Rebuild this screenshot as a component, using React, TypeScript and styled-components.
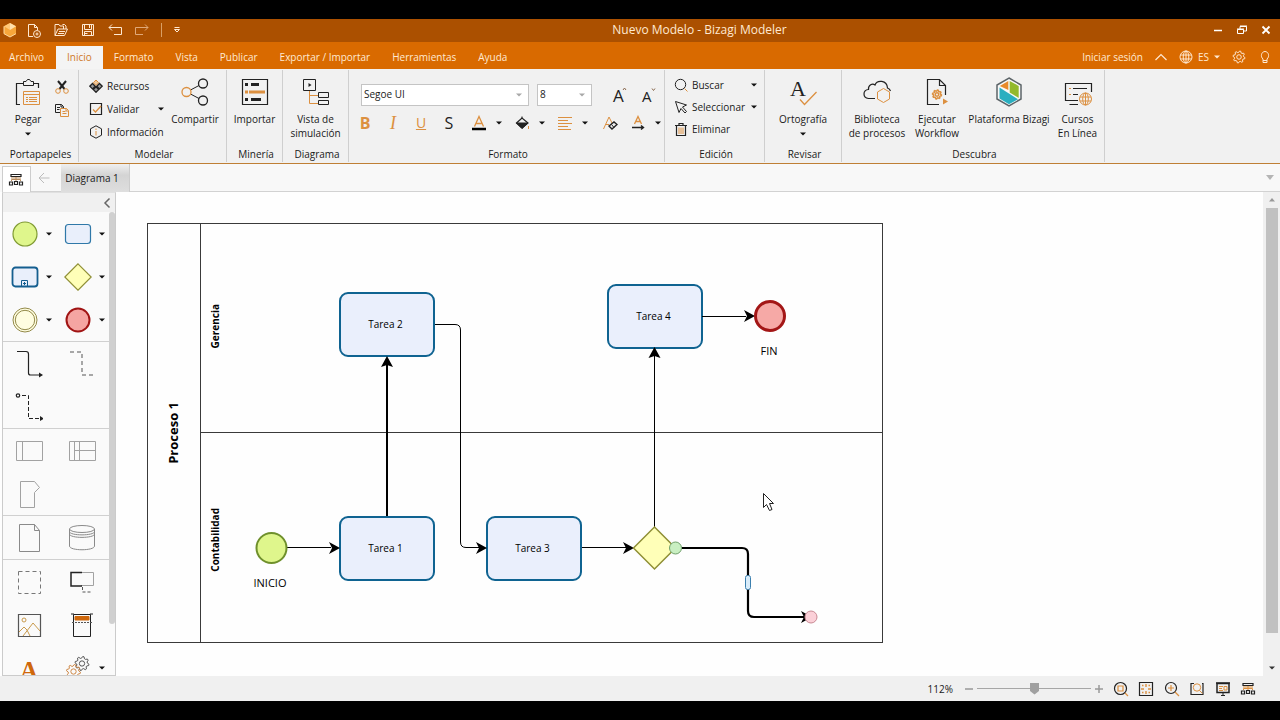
import React from 'react';
import styled, { createGlobalStyle, css } from 'styled-components';

const INK = '#222222';
const AMBER = '#dc9040';
const RUST = '#cf680c';
const CREAM = '#ffe9d2';

const GlobalStyle = createGlobalStyle`
  * { box-sizing: border-box; }
  body {
    margin: 0;
    background: #000;
    color: #1a1a1a;
    font: 10px/14px 'Open Sans', 'Noto Sans', sans-serif;
  }
  button, select, input { font: inherit; color: inherit; margin: 0; }
  button { background: none; border: 0; padding: 0; cursor: pointer; }
  svg { display: block; flex: none; }
`;

/* ---------- shell ---------- */

const Window = styled.div`
  display: flex;
  flex-direction: column;
  height: 100vh;
  padding: 19px 0;
  background: #000;
  overflow: hidden;
`;

const TitleBar = styled.header`
  display: flex;
  align-items: center;
  flex: none;
  height: 23px;
  padding-bottom: 1px;
  background: #ab5000;
  color: ${CREAM};
`;

const QuickAccess = styled.div`
  display: flex;
  align-items: center;
  gap: 11px;
  width: 187px;
  padding-left: 2px;
`;

const Logo = styled.span`
  display: flex;
  margin-right: -3px;
`;

const Rule = styled.span`
  width: 1px;
  height: 14px;
  background: #d9a066;
`;

const WindowTitle = styled.h1`
  flex: 1;
  margin: 0;
  font-size: 12px;
  line-height: 20px;
  font-weight: 400;
  text-align: center;
`;

const WindowControls = styled.div`
  display: flex;
  gap: 12px;
  padding-right: 8px;
`;

const IconButton = styled.button<{ $w?: number; $h?: number }>`
  display: flex;
  align-items: center;
  justify-content: center;
  width: ${p => p.$w ?? 16}px;
  height: ${p => p.$h ?? 16}px;
  flex: none;
`;

const MenuBar = styled.nav`
  display: flex;
  align-items: stretch;
  flex: none;
  height: 27px;
  padding-top: 4px;
  background: #d96a00;
  color: ${CREAM};
`;

const MenuTab = styled.button<{ $active?: boolean; $file?: boolean }>`
  padding: 0 11px 2px;
  ${p => p.$file && css`width: 53px; padding: 0 0 2px; margin-right: 3px;`}
  ${p => p.$active && css`background: #f4f4f4; color: #d07a28;`}
`;

const Account = styled.div`
  display: flex;
  align-items: center;
  gap: 12px;
  margin-left: auto;
  padding: 0 8px 2px 0;
`;

const Language = styled.button`
  display: flex;
  align-items: center;
  gap: 5px;
`;

/* ---------- ribbon ---------- */

const Ribbon = styled.section`
  display: flex;
  flex: none;
  height: 95px;
  padding: 1px 0;
  background: #f1f1f1;
  border-bottom: 1px solid #bf7f35;
`;

const Group = styled.section<{ $w: number }>`
  display: flex;
  flex-direction: column;
  flex: none;
  width: ${p => p.$w}px;
  border-right: 1px solid #cfcfcf;
`;

const GroupBody = styled.div<{ $pad?: number; $gap?: number; $center?: boolean }>`
  display: flex;
  flex: 1;
  gap: ${p => p.$gap ?? 0}px;
  padding: 5px 0 0 ${p => p.$pad ?? 0}px;
  justify-content: ${p => (p.$center ? 'center' : 'flex-start')};
`;

const GroupName = styled.h2`
  margin: 0;
  padding: 0 0 1px 3px;
  font-size: 10px;
  line-height: 14px;
  font-weight: 400;
  text-align: center;
`;

const BigButton = styled.button<{ $w: number }>`
  display: flex;
  flex-direction: column;
  align-items: center;
  align-self: flex-start;
  gap: 3px;
  width: ${p => p.$w}px;
  white-space: pre-line;
  line-height: 14px;
`;

const BigIcon = styled.span`
  display: flex;
  align-items: center;
  height: 34px;
`;

const CaretSlot = styled.span`
  display: flex;
  align-items: center;
  height: 10px;
`;

const ButtonStack = styled.div<{ $w: number; $row: number }>`
  display: grid;
  grid-auto-rows: ${p => p.$row}px;
  align-content: start;
  width: ${p => p.$w}px;
`;

const RowButton = styled.button`
  display: flex;
  align-items: center;
  gap: 4px;
  padding-bottom: 2px;
  text-align: left;
  white-space: nowrap;
  & > span { flex: 1; }
`;

const FormatPane = styled.div`
  display: flex;
  flex-direction: column;
  gap: 7px;
  padding: 9px 0 0 8px;
`;

const FormatRow = styled.div<{ $gap: number; $indent?: number }>`
  display: flex;
  align-items: center;
  gap: ${p => p.$gap}px;
  padding-left: ${p => p.$indent ?? 0}px;
`;

const SelectBox = styled.label<{ $w: number }>`
  display: grid;
  grid-template-columns: 1fr 12px;
  align-items: center;
  width: ${p => p.$w}px;
  height: 22px;
  background: #fff;
  border: 1px solid #c4c4c4;
`;

const Select = styled.select`
  appearance: none;
  width: 100%;
  height: 20px;
  padding: 0 0 2px 2px;
  border: 0;
  background: none;
`;

const SplitButton = styled.button`
  display: flex;
  align-items: center;
  gap: 9px;
  height: 20px;
`;

const Letter = styled.span<{ $tone?: string; $size?: number; $kind?: 'bold' | 'italic' | 'underline' | 'strike' }>`
  color: ${p => p.$tone ?? AMBER};
  font-size: ${p => p.$size ?? 16}px;
  line-height: 20px;
  ${p => p.$kind === 'bold' && css`font-weight: 700;`}
  ${p => p.$kind === 'italic' && css`font-family: 'Liberation Serif', serif; font-style: italic;`}
  ${p => p.$kind === 'underline' && css`font-size: 14px; text-decoration: underline;`}
`;

/* ---------- document tabs ---------- */

const DocumentBar = styled.div`
  display: flex;
  flex: none;
  height: 28px;
  padding-left: 2px;
  background: #f8f8f8;
`;

const OverviewButton = styled.button`
  display: flex;
  align-items: center;
  justify-content: center;
  width: 29px;
  margin-top: 2px;
  padding-right: 2px;
  border: 1px solid #cdcdcd;
  border-bottom: 0;
  background: #fff;
`;

const BackButton = styled.button`
  display: flex;
  align-items: center;
  justify-content: center;
  width: 30px;
  padding-right: 4px;
  border-bottom: 1px solid #d2d2d2;
`;

const DocumentTab = styled.button`
  width: 69px;
  background: linear-gradient(#f0f0f0, #d4d4d4 40%, #dedede);
  border-right: 1px solid #cccccc;
  padding-right: 6px;
`;

const DocumentFill = styled.div`
  display: flex;
  align-items: center;
  justify-content: flex-end;
  flex: 1;
  padding-right: 5px;
  border-bottom: 1px solid #d2d2d2;
`;

/* ---------- workspace ---------- */

const Workspace = styled.main`
  display: flex;
  flex: 1;
  min-height: 0;
  background: #fefefe;
`;

const Palette = styled.aside`
  display: flex;
  flex-direction: column;
  flex: none;
  width: 114px;
  margin-left: 2px;
  border: 1px solid #cbcbcb;
  border-top-color: #e0e0e0;
  background: #fafafa;
`;

const PaletteHeader = styled.div`
  display: flex;
  align-items: center;
  justify-content: flex-end;
  flex: none;
  height: 19px;
  padding-right: 3px;
  background: #f0f0f0;
`;

const PaletteScroll = styled.div`
  display: flex;
  flex: 1;
  min-height: 0;
  overflow: hidden;
`;

const PaletteSections = styled.div`
  width: 106px;
  flex: none;
`;

const PaletteSection = styled.section`
  display: grid;
  grid-template-columns: 1fr 1fr;
  grid-auto-rows: 43px;
  border-bottom: 1px solid #d0d0d0;
`;

const PaletteItem = styled.button<{ $menu?: boolean }>`
  display: flex;
  align-items: center;
  gap: 7px;
  justify-content: ${p => (p.$menu ? 'flex-start' : 'center')};
  padding: ${p => (p.$menu ? '0 0 0 8px' : '0 2px 0 0')};
`;

const PaletteThumb = styled.div`
  width: 6px;
  height: 89%;
  border-radius: 3px;
  background: #d0d0d0;
`;

const Canvas = styled.div`
  position: relative;
  flex: 1;
  overflow: hidden;
`;

const Pool = styled.section`
  position: absolute;
  left: 31px;
  top: 31px;
  display: flex;
  width: 736px;
  height: 420px;
  border: 1px solid #3a3a3a;
`;

const PoolName = styled.h2`
  display: flex;
  align-items: center;
  justify-content: center;
  width: 53px;
  margin: 0;
  padding-right: 2px;
  border-right: 1px solid #3a3a3a;
  font-size: 13px;
  line-height: 16px;
  font-weight: 700;
  color: #000;
`;

const Lanes = styled.div`
  display: grid;
  grid-template-rows: calc(50% - 1px) 1fr;
  flex: 1;
`;

const Lane = styled.section`
  display: flex;
  align-items: center;
  padding-left: 6px;
  & + & { border-top: 1px solid #3a3a3a; padding-top: 8px; }
`;

const LaneName = styled.h3`
  margin: 0;
  font-size: 10px;
  line-height: 16px;
  font-weight: 700;
  color: #000;
`;

const Upright = styled.span`
  writing-mode: vertical-rl;
  transform: rotate(180deg);
`;

const Task = styled.div<{ $x: number; $y: number }>`
  position: absolute;
  left: ${p => p.$x}px;
  top: ${p => p.$y}px;
  display: flex;
  align-items: center;
  justify-content: center;
  width: 96px;
  height: 65px;
  padding: 0 3px 2px 0;
  border: 2px solid #0f6391;
  border-radius: 9px;
  background: #eaeffc;
  color: #000;
`;

const Caption = styled.div<{ $x: number; $y: number }>`
  position: absolute;
  left: ${p => p.$x}px;
  top: ${p => p.$y}px;
  width: 60px;
  font-size: 11px;
  line-height: 16px;
  text-align: center;
  color: #000;
`;

const Connectors = styled.svg`
  position: absolute;
  left: 0;
  top: 0;
`;

const ScrollBar = styled.div`
  display: flex;
  flex-direction: column;
  align-items: center;
  flex: none;
  width: 17px;
  background: #f0f0f0;
`;

const ScrollArrow = styled.button`
  display: flex;
  align-items: center;
  justify-content: center;
  width: 17px;
  height: 16px;
`;

const ScrollTrack = styled.div`
  flex: 1;
  width: 12px;
`;

const ScrollThumb = styled.div`
  height: 94%;
  background: #c1c1c1;
`;

/* ---------- status bar ---------- */

const StatusBar = styled.footer`
  display: flex;
  align-items: center;
  justify-content: flex-end;
  flex: none;
  height: 25px;
  padding-right: 24px;
  background: #f0f0f0;
`;

const ZoomValue = styled.output`
  margin-right: 12px;
`;

const ZoomSlider = styled.input`
  appearance: none;
  width: 114px;
  height: 14px;
  margin: 0 4px;
  background: linear-gradient(#a6a6a6, #a6a6a6) center / 100% 1px no-repeat;
  &::-webkit-slider-thumb {
    appearance: none;
    width: 9px;
    height: 12px;
    background: #a0a0a0;
    clip-path: polygon(0 0, 100% 0, 100% 70%, 50% 100%, 0 70%);
  }
`;

const ViewButtons = styled.div`
  display: flex;
  justify-content: space-between;
  width: 143px;
  margin-left: 10px;
`;

/* ---------- icons ---------- */

type IconProps = { w?: number; h?: number; c?: string; sw?: number; children: React.ReactNode };
const Icon = ({ w = 16, h = w, c = INK, sw = 1, children }: IconProps) => (
  <svg width={w} height={h} viewBox={`0 0 ${w} ${h}`} fill="none" stroke={c} strokeWidth={sw} aria-hidden="true">
    {children}
  </svg>
);

const Caret = ({ c = '#111' }: { c?: string }) => (
  <Icon w={6} h={4} c="none"><path d="M0 .5h6L3 3.5z" fill={c} /></Icon>
);

const Gear = ({ x, y, r, c, sw = 1 }: { x: number; y: number; r: number; c: string; sw?: number }) => {
  const pts: string[] = [];
  for (let i = 0; i < 32; i++) {
    const radius = i % 4 < 2 ? r : r * 0.76;
    const a = ((i + 0.5) * Math.PI) / 16;
    pts.push(`${(x + radius * Math.cos(a)).toFixed(2)},${(y + radius * Math.sin(a)).toFixed(2)}`);
  }
  return (
    <g stroke={c} strokeWidth={sw} strokeLinejoin="round">
      <polygon points={pts.join(' ')} />
      <circle cx={x} cy={y} r={r * 0.38} />
    </g>
  );
};

const BizagiLogo = () => (
  <Icon w={16} c="none">
    <path d="M8 1l6 3.300v7.400L8 15l-6-3.300V4.300z" fill="#f7a63a" />
    <path d="M8 1l6 3.300L8 8z" fill="#ffe0ad" />
    <path d="M8 1L2 4.300 8 8z" fill="#ffc878" />
    <path d="M2 4.300v7.400L8 15l6-3.300" stroke="#ffd9a0" />
  </Icon>
);
const NewIcon = () => (
  <Icon c={CREAM}>
    <path d="M7 14.500H2.500v-12h6l3 3V8M8.500 2.500v3h3" />
    <circle cx="11" cy="12" r="3.500" /><path d="M11 10.500v3M9.500 12h3" />
  </Icon>
);
const OpenIcon = () => (
  <Icon c={CREAM}>
    <path d="M2 13.500V2.500h4l1 1.500h3.500v3M2 13.500l3-6.500h9.500l-3 6.500zM6 9.500h6M5 11.500h6M9.500 2.500h2l1.500 1.500v3" />
  </Icon>
);
const SaveIcon = () => (
  <Icon c={CREAM}><path d="M2.500 2.500h11v11h-11zM4.500 2.500v5h7v-5M4.500 13.500v-4h7v4M9.500 3v3M4.500 11.500h3" /></Icon>
);
const UndoIcon = () => <Icon c={CREAM}><path d="M2 5.500h12.500v7H7M5 2.500l-3 3 3 3" /></Icon>;
const RedoIcon = () => <Icon c="#e0a878"><path d="M14 5.500H1.500v7H9M11 2.500l3 3-3 3" /></Icon>;
const CustomizeIcon = () => <Icon w={8} h={8} c={CREAM}><path d="M1.500 1.500h5M1.500 3.500h5L4 6z" /></Icon>;

const Globe = ({ c = CREAM }: { c?: string }) => (
  <Icon w={14} c={c}>
    <circle cx="7" cy="7" r="6" /><ellipse cx="7" cy="7" rx="2.800" ry="6" /><path d="M1.500 5h11M1.500 9h11M7 1v12" />
  </Icon>
);
const Bulb = () => (
  <Icon w={14} c={CREAM}>
    <path d="M5 10.500V9C2 6.500 3.500 1.500 7 1.500S12 6.500 9 9v1.500zM5 12.500h4M5 10.500v2M9 10.500v2" />
  </Icon>
);

const PasteIcon = () => (
  <Icon w={32}>
    <path d="M8 28.500H4.500v-21H11M22 7.500h4.500V12" strokeWidth="1.200" />
    <path d="M11.500 9.500v-4H14l1.500-2h2l1.500 2h2.500v4z" />
    <g stroke={AMBER}>
      <path d="M11.500 15.500h16v13h-16zM11.500 18.500h16M14 21.500h2M17 21.500h8M14 23.500h2M17 23.500h8M14 25.500h2M17 25.500h8" />
    </g>
  </Icon>
);
const CutIcon = () => (
  <Icon>
    <path d="M4 2l6.500 8M12 2L5.500 10" strokeWidth="2" />
    <g stroke={AMBER}><circle cx="4" cy="12" r="2.300" /><circle cx="12" cy="12" r="2.300" /></g>
  </Icon>
);
const CopyIcon = () => (
  <Icon>
    <path d="M6 10.500H1.500v-8h6l2 2V6M7 2.500v2.500h2M3 5.500h3M3 7.500h2.500" />
    <path d="M6.500 6.500h6l2 2v6h-8zM12 6.500V9h2M8.500 9.500h3M8.500 11.500h4" stroke={AMBER} />
  </Icon>
);
const ResourcesIcon = () => (
  <Icon w={14}>
    <path d="M7 1l2.700 2.700L7 6.400 4.300 3.700z" stroke={AMBER} fill="#efc79a" />
    <path d="M3.500 4.500L6.200 7.200 3.500 9.900.8 7.200zM10.500 4.500l2.700 2.700-2.700 2.700-2.700-2.700zM7 7.900l2.700 2.700L7 13.300l-2.700-2.700z" strokeWidth="1.300" fill="#9a9a9a" />
  </Icon>
);
const ValidateIcon = () => (
  <Icon w={14}><path d="M1.500 1.500h11v11h-11z" strokeWidth="1.200" /><path d="M4 7.500L6.500 10 12 4" stroke={AMBER} strokeWidth="1.300" /></Icon>
);
const InfoIcon = () => (
  <Icon w={14}>
    <path d="M7 .8l5.500 3v6.400L7 13.200l-5.500-3V3.800z" />
    <path d="M7 6v4.500M7 3.500V5" stroke={AMBER} />
  </Icon>
);
const ShareIcon = () => (
  <Icon w={32}>
    <path d="M11.500 14L20 9.500M11.500 18l8.500 4.500" />
    <g strokeWidth="1.300"><circle cx="24" cy="7.500" r="4.500" /><circle cx="24" cy="24.500" r="4.500" />
      <circle cx="7.500" cy="16" r="4.500" stroke={AMBER} /></g>
  </Icon>
);
const ImportIcon = () => (
  <Icon w={32}>
    <path d="M3.500 3.500h25v25h-25z" strokeWidth="1.200" />
    <g stroke="none" fill={INK}>
      <path d="M6 7h3v3H6zM12 7h8v3h-8zM6 22h3v3H6zM12 22h10v3H12z" />
      <path d="M6 14.500h3v3H6zM10 14.500h16v3H10z" fill={AMBER} />
    </g>
  </Icon>
);
const SimulationIcon = () => (
  <Icon w={32}>
    <path d="M3.500 3.500h12v11h-12z" /><path d="M8.500 7v4l3-2z" fill={INK} stroke="none" />
    <path d="M9.500 15v12.500H18M9.500 19.500H18" stroke={AMBER} />
    <path d="M18.500 16.500h10v5h-10zM18.500 24.500h10v4h-10z" />
  </Icon>
);
const SpellIcon = () => (
  <Icon w={32}>
    <text x="3" y="20" fill={INK} stroke="none" fontFamily="Liberation Serif, serif" fontSize="22">A</text>
    <path d="M13 23.500l4.500 5L29.500 16" stroke={AMBER} strokeWidth="1.300" />
  </Icon>
);
const CloudIcon = () => (
  <Icon w={32}>
    <path d="M14 22.500H7.500c-6-.5-6-8.500 0-9C7 9 11.500 7 14 9c2-5.500 12-5 12.500 3 1.500.5 2.500 1.500 3 3" strokeWidth="1.200" />
    <path d="M22.500 12.500l6 3.500v7l-6 3.500-6-3.500v-7z" stroke={AMBER} fill="#f1f1f1" />
  </Icon>
);
const WorkflowIcon = () => (
  <Icon w={32}>
    <path d="M18 28.500H6.500v-25h12l6 6V19M18.500 3.500v6h6" strokeWidth="1.200" />
    <Gear x={16} y={18.500} r={4.500} c={AMBER} sw={1.500} />
    <path d="M22 22.500v6l5-3z" fill={AMBER} stroke="none" />
  </Icon>
);
const PlatformIcon = () => (
  <Icon w={32} c="none">
    <path d="M16 2l12 7v14l-12 7L4 23V9z" fill="#f8f8f8" stroke="#5c6468" strokeWidth="1.500" />
    <path d="M15.300 5v9L6.800 10z" fill="#e88a2a" />
    <path d="M16.700 5l9 5v12l-9-5.500z" fill="#93b92c" />
    <path d="M6.500 11.500L25 23.300 16 28.300 6.500 22.500z" fill="#29afc0" />
  </Icon>
);
const CoursesIcon = () => (
  <Icon w={32}>
    <path d="M16 24.500H3.500v-17h26V16M7.500 28.500H16M11 12.500h14M11 18.500h5" strokeWidth="1.200" />
    <path d="M7 12.500h2M7 18.500h2" stroke={AMBER} />
    <g stroke={AMBER}><circle cx="23.500" cy="23" r="6" fill="#f1f1f1" /><ellipse cx="23.500" cy="23" rx="2.800" ry="6" /><path d="M18 21h11M18 25h11M23.500 17v12" /></g>
  </Icon>
);

const FillIcon = () => (
  <Icon><path d="M2.500 8l5.500-5 6 5-6 5z" strokeWidth="1.200" /><path d="M2.500 8h11.500L8 13.500z" fill={INK} /><path d="M8 3V1.500" /><path d="M14.500 11v3" stroke={AMBER} /></Icon>
);
const AlignIcon = () => <Icon c={AMBER}><path d="M1 2.500h14M1 5.500h10M1 8.500h14M1 11.500h10M1 14.500h13" /></Icon>;
const ClearFormatIcon = () => (
  <Icon>
    <path d="M1.500 14L7 2l3 6M4 9.500h3" stroke={AMBER} />
    <path d="M7 11l5-4 3 2.500-5 4.500z" strokeWidth="1.400" /><path d="M9.500 9.500l2.500 3" />
  </Icon>
);
const TextColorIcon = () => (
  <Icon><path d="M3.500 11.500L8 1.500l4.500 10M5 8.500h6" stroke={AMBER} strokeWidth="1.300" /><path d="M1 14h14" stroke="#000" strokeWidth="2.500" /></Icon>
);
const TextDirectionIcon = () => (
  <Icon><path d="M4.500 9L8 1.500 11.500 9M6 6.500h4" stroke={AMBER} strokeWidth="1.300" /><path d="M2 12.500h11M11 10.500l2.500 2-2.500 2" strokeWidth="1.400" /></Icon>
);
const FontSizeIcon = ({ size, up }: { size: number; up?: boolean }) => (
  <Icon w={16} h={26}>
    <text x="1" y="20" fill={INK} stroke="none" fontSize={size}>A</text>
    <path d={up ? 'M11 8l1.500-2L14 8' : 'M11 6.500l1.500 2 1.500-2'} stroke="#8a6a50" />
  </Icon>
);
const SearchIcon = () => (
  <Icon w={14}><circle cx="6.500" cy="6.500" r="5.200" /><path d="M10.500 10.500l3 3" stroke={AMBER} /></Icon>
);
const SelectIcon = () => <Icon w={14}><path d="M1.500 1.500l11 3.500-4 2 4 4.500-1.500 1.500-4-4.500-2 4z" /></Icon>;
const TrashIcon = () => (
  <Icon w={14}><path d="M1 3.500h12M5 3V1.500h4V3M2.500 4v9.500h9V4" strokeWidth="1.200" /><path d="M5 5.500v6.500M7 5.500v6.500M9 5.500v6.500" stroke={AMBER} /></Icon>
);
const TreeIcon = ({ accent = AMBER }: { accent?: string }) => (
  <Icon>
    <path d="M3 2.500h10v2H3z" strokeWidth="1.200" /><path d="M3 6h10M3.500 9V7.500h9V9M8 5v4" stroke={accent} />
    <path d="M1.500 10h3v3h-3zM6.500 9.500h3v3h-3zM11.500 10h3v3h-3z" strokeWidth="1.200" />
  </Icon>
);
const ZoomPageIcon = () => (
  <Icon><circle cx="7.500" cy="7.500" r="6" strokeWidth="1.200" /><path d="M5 5h5v5H5zM12 12l3 3" stroke={AMBER} strokeWidth="1.200" /></Icon>
);
const FitIcon = () => (
  <Icon><path d="M1.500 1.500h13v13h-13z" strokeWidth="1.200" /><path d="M8 3v3M8 10v3M3 8h3M10 8h3M4 4.500h1.500M10.500 4.500H12M4 11.500h1.500M10.500 11.500H12" stroke={AMBER} strokeWidth="1.400" /></Icon>
);
const ZoomInIcon = () => (
  <Icon><circle cx="7" cy="7" r="5.500" strokeWidth="1.200" /><path d="M7 4v6M4 7h6M11 11l4 4" stroke={AMBER} strokeWidth="1.200" /></Icon>
);
const ZoomAreaIcon = () => (
  <Icon><path d="M5 2.500H2v11h12v-11h-1" strokeWidth="1.200" /><circle cx="8" cy="6.500" r="3.700" stroke={AMBER} /><path d="M10.500 9.500l3 3" stroke={AMBER} /></Icon>
);
const PresentIcon = () => (
  <Icon><path d="M2 2.500h12v9H2z" strokeWidth="1.500" /><path d="M1 2h14" strokeWidth="1.500" /><path d="M4 5.500h4M4 7.500h3M4 9.500h4M9 5.500h3v3.500H9z" stroke={AMBER} /><path d="M8 11v3M6 14.500h4" /></Icon>
);

/* ---------- palette shapes ---------- */

const GREY = '#a2a2a2';
const shapes: Record<string, React.ReactNode> = {
  start: <Icon w={28}><circle cx="14" cy="14" r="12" fill="#dff68c" stroke="#7f9a32" strokeWidth="1.200" /></Icon>,
  task: <Icon w={28}><rect x="1.500" y="4.500" width="25" height="19" rx="3" fill="#e9effb" stroke="#2f78a8" strokeWidth="1.200" /></Icon>,
  subprocess: (
    <Icon w={28} c="#145e8f">
      <rect x="1.500" y="4.500" width="25" height="19" rx="3" fill="#e9effb" strokeWidth="1.800" />
      <path d="M10.500 17.500h6v6h-6zM13.500 19v3M12 20.500h3" />
    </Icon>
  ),
  gateway: <Icon w={28}><path d="M14 .8L27.200 14 14 27.200.8 14z" fill="#ffffb8" stroke="#8f8f35" strokeWidth="1.200" /></Icon>,
  intermediate: (
    <Icon w={28} c="#938a4a"><circle cx="14" cy="14" r="12" fill="#fffde0" /><circle cx="14" cy="14" r="9.700" /></Icon>
  ),
  end: <Icon w={28}><circle cx="14" cy="14" r="11.500" fill="#f5a5a2" stroke="#a01414" strokeWidth="2" /></Icon>,
  sequence: <Icon w={28}><path d="M2 1.500h9q2.500 0 2.500 2.500v19q0 2 2 2h11" strokeWidth="1.200" /><path d="M24 22.500l4 2.500-4 2.500z" fill={INK} stroke="none" /></Icon>,
  association: <Icon w={28} c="#555"><path d="M2 2h12v23h13" strokeDasharray="4 3" /></Icon>,
  message: (
    <Icon w={28}>
      <circle cx="3" cy="2.500" r="1.700" strokeWidth="1.200" />
      <path d="M7 2.500h6.500V25.500H26" strokeDasharray="4 2" /><path d="M25 23v5l4-2.500z" fill={INK} stroke="none" />
    </Icon>
  ),
  pool: <Icon w={28} c={GREY}><path d="M1.500 4.500h26v19h-26zM7.500 4.500v19" /></Icon>,
  lanes: <Icon w={28} c={GREY}><path d="M1.500 4.500h26v19h-26zM6.500 4.500v19M11.500 4.500v19M6.500 13.500h21" /></Icon>,
  milestone: <Icon w={28} c={GREY}><path d="M5.500 1.500h14l5 6-5 5v15h-14z" /></Icon>,
  dataObject: <Icon w={28} c="#8a8a8a"><path d="M4.500 .5h15l5 6v21h-20zM19.500 .5v6h5" /></Icon>,
  dataStore: (
    <Icon w={28} c="#8a8a8a">
      <ellipse cx="14" cy="5" rx="12.500" ry="3.500" />
      <path d="M1.500 5v17c0 5 25 5 25 0V5M1.500 7.500c0 4.500 25 4.500 25 0M1.500 10c0 4.500 25 4.500 25 0" />
    </Icon>
  ),
  group: <Icon w={28} c="#777"><path d="M3.500 3.500h22v22h-22z" strokeDasharray="4 3" /></Icon>,
  annotation: (
    <Icon w={28}>
      <path d="M13 4.500h12.500v13H13" stroke={GREY} /><path d="M14 4.500H3v13.500h11" strokeWidth="1.500" />
      <path d="M14.500 19v5h9" strokeDasharray="3 2" stroke="#555" />
    </Icon>
  ),
  image: (
    <Icon w={28}>
      <path d="M3.500 3.500h22v22h-22z" strokeWidth="1.200" stroke="#555" />
      <g stroke="#c99a4c"><circle cx="9" cy="9" r="2" /><path d="M4 21l5-5 3 3M8 25l10-13 7 8M12 19l3 6" /></g>
    </Icon>
  ),
  header: (
    <Icon w={28}>
      <path d="M5.500 3.500h17v22h-17z" /><path d="M7 5.500h14V9H7z" fill={RUST} stroke={RUST} />
      <path d="M4 11.500h20" strokeDasharray="2 1" stroke="#555" /><path d="M3 3h3M22 3h3" />
    </Icon>
  ),
  text: (
    <Icon w={28}><text x="5" y="25" fill={RUST} stroke="none" fontFamily="Liberation Serif, serif" fontWeight="700" fontSize="25">A</text></Icon>
  ),
  artifact: (
    <Icon w={28}><Gear x={18} y={9.500} r={7} c="#555" /><Gear x={9.500} y={17.500} r={7} c="#cf8a4a" /></Icon>
  ),
};

const sections: { items: [string, string, boolean?][] }[] = [
  { items: [['start', 'Evento de inicio', true], ['task', 'Tarea', true], ['subprocess', 'Subproceso', true], ['gateway', 'Compuerta', true], ['intermediate', 'Evento intermedio', true], ['end', 'Evento de fin', true]] },
  { items: [['sequence', 'Flujo de secuencia'], ['association', 'Asociación'], ['message', 'Flujo de mensaje']] },
  { items: [['pool', 'Contenedor'], ['lanes', 'Carril'], ['milestone', 'Fase']] },
  { items: [['dataObject', 'Objeto de datos'], ['dataStore', 'Depósito de datos']] },
  { items: [['group', 'Grupo'], ['annotation', 'Anotación'], ['image', 'Imagen'], ['header', 'Encabezado'], ['text', 'Texto con formato'], ['artifact', 'Artefacto', true]] },
];

/* ---------- pieces ---------- */

const Big = ({ w, icon, label, menu }: { w: number; icon: React.ReactNode; label: string; menu?: boolean }) => (
  <BigButton $w={w}>
    <BigIcon>{icon}</BigIcon>
    {label}
    {menu && <CaretSlot><Caret /></CaretSlot>}
  </BigButton>
);

const Row = ({ icon, label, menu }: { icon: React.ReactNode; label: string; menu?: boolean }) => (
  <RowButton>{icon}<span>{label}</span>{menu && <Caret />}</RowButton>
);

const Split = ({ icon, label }: { icon: React.ReactNode; label: string }) => (
  <SplitButton aria-label={label}>{icon}<Caret /></SplitButton>
);

const RibbonGroup = ({ w, name, pad, gap, center, children }: {
  w: number; name: string; pad?: number; gap?: number; center?: boolean; children: React.ReactNode;
}) => (
  <Group $w={w}>
    <GroupBody $pad={pad} $gap={gap} $center={center}>{children}</GroupBody>
    <GroupName>{name}</GroupName>
  </Group>
);

const arrowRight = (x: number, y: number) => `M${x} ${y}l-11 -6l3 6l-3 6z`;
const arrowUp = (x: number, y: number) => `M${x} ${y}l-6 11l6 -2l6 2z`;

const Flow = () => (
  <Connectors width="780" height="460" viewBox="0 0 780 460" fill="none" stroke="#000" aria-hidden="true">
    <path d="M171 355.500h44" strokeWidth="1.200" />
    <path d="M271 324V172" strokeWidth="2" />
    <path d="M319 132.500h20q5.500 0 5.500 5.500v212q0 5.500 5.500 5.500h14" />
    <path d="M466 355.500h44M586 124.500h44" strokeWidth="1.200" />
    <path d="M538.500 335V162" />
    <path d="M566 356h60q6 0 6 6v57q0 6 6 6h50" strokeWidth="2.200" />
    <g fill="#000" stroke="none">
      <path d={arrowRight(224, 356)} />
      <path d={arrowRight(371, 356)} />
      <path d={arrowRight(518, 356)} />
      <path d={arrowRight(639, 124)} />
      <path d={arrowRight(696, 425)} />
      <path d={arrowUp(271, 164)} />
      <path d={arrowUp(538.5, 155)} />
    </g>
    <circle cx="155.500" cy="356" r="15" fill="#dff68c" stroke="#6f902c" strokeWidth="2" />
    <circle cx="654" cy="124" r="14.500" fill="#f6a9a6" stroke="#a31616" strokeWidth="3" />
    <path d="M538.500 335l21 21-21 21-21-21z" fill="#ffffb8" stroke="#8f8f35" strokeWidth="1.500" />
    <circle cx="559.500" cy="356" r="6" fill="#c9efc2" stroke="#6f9f6a" />
    <rect x="629.500" y="383.500" width="5" height="14" rx="2" fill="#d8ecfa" stroke="#3b7fae" />
    <circle cx="695" cy="425" r="6" fill="#fbd0d8" stroke="#c98a94" />
    <path d="M647.500 301.500v14l3-3 3 6 2.500-1-2.500-6h4z" fill="#fff" stroke="#222" />
  </Connectors>
);

export default function App() {
  return (
    <Window>
      <GlobalStyle />
      <TitleBar>
        <QuickAccess>
          <Logo><BizagiLogo /></Logo>
          <IconButton aria-label="Nuevo"><NewIcon /></IconButton>
          <IconButton aria-label="Abrir"><OpenIcon /></IconButton>
          <IconButton aria-label="Guardar"><SaveIcon /></IconButton>
          <IconButton aria-label="Deshacer"><UndoIcon /></IconButton>
          <IconButton aria-label="Rehacer"><RedoIcon /></IconButton>
          <Rule />
          <IconButton $w={8} aria-label="Personalizar"><CustomizeIcon /></IconButton>
        </QuickAccess>
        <WindowTitle>Nuevo Modelo - Bizagi Modeler</WindowTitle>
        <WindowControls>
          <IconButton $w={12} aria-label="Minimizar"><Icon w={12} c="#fff"><path d="M2 6.500h8" strokeWidth="1.500" /></Icon></IconButton>
          <IconButton $w={12} aria-label="Restaurar">
            <Icon w={12} c="#fff"><path d="M1.500 5.500h6v4h-6zM4 5V2.500h6.500v4.500H8M1 5h7M4 2h7" /></Icon>
          </IconButton>
          <IconButton $w={12} aria-label="Cerrar"><Icon w={12} c="#fff" sw={1.800}><path d="M2.500 2.500l7 7M9.500 2.500l-7 7" /></Icon></IconButton>
        </WindowControls>
      </TitleBar>

      <MenuBar>
        <MenuTab $file>Archivo</MenuTab>
        <MenuTab $active>Inicio</MenuTab>
        <MenuTab>Formato</MenuTab>
        <MenuTab>Vista</MenuTab>
        <MenuTab>Publicar</MenuTab>
        <MenuTab>Exportar / Importar</MenuTab>
        <MenuTab>Herramientas</MenuTab>
        <MenuTab>Ayuda</MenuTab>
        <Account>
          <button>Iniciar sesión</button>
          <IconButton $w={12} aria-label="Contraer cinta"><Icon w={12} h={8} c={CREAM} sw={1.200}><path d="M.5 7L6 1.500 11.500 7" /></Icon></IconButton>
          <Language><Globe />ES<Caret c={CREAM} /></Language>
          <IconButton $w={14} aria-label="Configuración"><Icon w={14}><Gear x={7} y={7} r={6} c={CREAM} /></Icon></IconButton>
          <IconButton $w={14} aria-label="Sugerencias"><Bulb /></IconButton>
        </Account>
      </MenuBar>

      <Ribbon>
        <RibbonGroup w={79} name="Portapapeles" pad={8} gap={5}>
          <Big w={40} icon={<PasteIcon />} label="Pegar" menu />
          <ButtonStack $w={18} $row={23}>
            <IconButton $w={18} $h={23} aria-label="Cortar"><CutIcon /></IconButton>
            <IconButton $w={18} $h={23} aria-label="Copiar"><CopyIcon /></IconButton>
          </ButtonStack>
        </RibbonGroup>
        <RibbonGroup w={148} name="Modelar" pad={10} gap={3}>
          <ButtonStack $w={75} $row={23}>
            <Row icon={<ResourcesIcon />} label="Recursos" />
            <Row icon={<ValidateIcon />} label="Validar" menu />
            <Row icon={<InfoIcon />} label="Información" />
          </ButtonStack>
          <Big w={56} icon={<ShareIcon />} label="Compartir" />
        </RibbonGroup>
        <RibbonGroup w={56} name="Minería" center>
          <Big w={50} icon={<ImportIcon />} label="Importar" />
        </RibbonGroup>
        <RibbonGroup w={66} name="Diagrama" center>
          <Big w={60} icon={<SimulationIcon />} label={'Vista de\nsimulación'} />
        </RibbonGroup>
        <RibbonGroup w={316} name="Formato">
          <FormatPane>
            <FormatRow $gap={8} $indent={4}>
              <SelectBox $w={168}>
                <Select aria-label="Fuente" defaultValue="Segoe UI"><option>Segoe UI</option></Select>
                <Caret c="#a8a8a8" />
              </SelectBox>
              <SelectBox $w={55}>
                <Select aria-label="Tamaño de fuente" defaultValue="8"><option>8</option></Select>
                <Caret c="#a8a8a8" />
              </SelectBox>
              <FormatRow $gap={13} $indent={12}>
                <IconButton aria-label="Aumentar fuente"><FontSizeIcon size={17} up /></IconButton>
                <IconButton aria-label="Reducir fuente"><FontSizeIcon size={15} /></IconButton>
              </FormatRow>
            </FormatRow>
            <FormatRow $gap={14}>
              <FormatRow $gap={12}>
                <IconButton $h={20} aria-label="Negrita"><Letter $kind="bold">B</Letter></IconButton>
                <IconButton $h={20} aria-label="Cursiva"><Letter $kind="italic" $size={18}>I</Letter></IconButton>
                <IconButton $h={20} aria-label="Subrayado"><Letter $kind="underline">U</Letter></IconButton>
                <IconButton $h={20} aria-label="Tachado"><Letter $tone={INK}>S</Letter></IconButton>
              </FormatRow>
              <FormatRow $gap={12}>
                <Split icon={<TextColorIcon />} label="Color de fuente" />
                <Split icon={<FillIcon />} label="Color de relleno" />
                <Split icon={<AlignIcon />} label="Alineación" />
              </FormatRow>
              <FormatRow $gap={12}>
                <IconButton $h={20} aria-label="Borrar formato"><ClearFormatIcon /></IconButton>
                <Split icon={<TextDirectionIcon />} label="Dirección del texto" />
              </FormatRow>
            </FormatRow>
          </FormatPane>
        </RibbonGroup>
        <RibbonGroup w={100} name="Edición" pad={9}>
          <ButtonStack $w={83} $row={22}>
            <Row icon={<SearchIcon />} label="Buscar" menu />
            <Row icon={<SelectIcon />} label="Seleccionar" menu />
            <Row icon={<TrashIcon />} label="Eliminar" />
          </ButtonStack>
        </RibbonGroup>
        <RibbonGroup w={77} name="Revisar" center>
          <Big w={60} icon={<SpellIcon />} label="Ortografía" menu />
        </RibbonGroup>
        <RibbonGroup w={263} name="Descubra" pad={5}>
          <Big w={60} icon={<CloudIcon />} label={'Biblioteca\nde procesos'} />
          <Big w={60} icon={<WorkflowIcon />} label={'Ejecutar\nWorkflow'} />
          <Big w={84} icon={<PlatformIcon />} label="Plataforma Bizagi" />
          <Big w={53} icon={<CoursesIcon />} label={'Cursos\nEn Línea'} />
        </RibbonGroup>
      </Ribbon>

      <DocumentBar>
        <OverviewButton aria-label="Vista de diagramas"><TreeIcon accent="#b98c5e" /></OverviewButton>
        <BackButton aria-label="Atrás"><Icon w={12} c="#bcbcbc"><path d="M11.500 6H1M6 1L1 6l5 5" /></Icon></BackButton>
        <DocumentTab>Diagrama 1</DocumentTab>
        <DocumentFill>
          <IconButton $w={10} aria-label="Lista de diagramas"><Icon w={8} h={5} c="none"><path d="M0 0h8L4 5z" fill="#b5b5b5" /></Icon></IconButton>
        </DocumentFill>
      </DocumentBar>

      <Workspace>
        <Palette aria-label="Paleta">
          <PaletteHeader>
            <IconButton $w={10} aria-label="Ocultar paleta"><Icon w={8} h={12} c="#666" sw={1.500}><path d="M6.500 1.500L2 6l4.500 4.500" /></Icon></IconButton>
          </PaletteHeader>
          <PaletteScroll>
            <PaletteSections>
              {sections.map((s, i) => (
                <PaletteSection key={i}>
                  {s.items.map(([id, label, menu]) => (
                    <PaletteItem key={id} $menu={menu} aria-label={label}>
                      {shapes[id]}
                      {menu && <Caret />}
                    </PaletteItem>
                  ))}
                </PaletteSection>
              ))}
            </PaletteSections>
            <PaletteThumb />
          </PaletteScroll>
        </Palette>
        <Canvas>
          <Pool>
            <PoolName><Upright>Proceso 1</Upright></PoolName>
            <Lanes>
              <Lane><LaneName><Upright>Gerencia</Upright></LaneName></Lane>
              <Lane><LaneName><Upright>Contabilidad</Upright></LaneName></Lane>
            </Lanes>
          </Pool>
          <Task $x={223} $y={100}>Tarea 2</Task>
          <Task $x={223} $y={324}>Tarea 1</Task>
          <Task $x={370} $y={324}>Tarea 3</Task>
          <Task $x={491} $y={92}>Tarea 4</Task>
          <Flow />
          <Caption $x={124} $y={383}>INICIO</Caption>
          <Caption $x={623} $y={151}>FIN</Caption>
        </Canvas>
        <ScrollBar>
          <ScrollArrow aria-label="Subir"><Icon w={6} h={4} c="none"><path d="M0 3.500h6L3 0z" fill="#999" /></Icon></ScrollArrow>
          <ScrollTrack><ScrollThumb /></ScrollTrack>
          <ScrollArrow aria-label="Bajar"><Caret c="#333" /></ScrollArrow>
        </ScrollBar>
      </Workspace>

      <StatusBar>
        <ZoomValue>112%</ZoomValue>
        <IconButton $w={8} aria-label="Alejar"><Icon w={8} c="#999"><path d="M0 4h8" strokeWidth="1.500" /></Icon></IconButton>
        <ZoomSlider type="range" aria-label="Zoom" min={10} max={212} defaultValue={112} />
        <IconButton $w={8} aria-label="Acercar"><Icon w={8} c="#999"><path d="M0 4h8M4 0v8" strokeWidth="1.500" /></Icon></IconButton>
        <ViewButtons>
          <IconButton aria-label="Zoom de página"><ZoomPageIcon /></IconButton>
          <IconButton aria-label="Ajustar a la ventana"><FitIcon /></IconButton>
          <IconButton aria-label="Ampliar"><ZoomInIcon /></IconButton>
          <IconButton aria-label="Zoom de selección"><ZoomAreaIcon /></IconButton>
          <IconButton aria-label="Presentación"><PresentIcon /></IconButton>
          <IconButton aria-label="Diagramas"><TreeIcon /></IconButton>
        </ViewButtons>
      </StatusBar>
    </Window>
  );
}
